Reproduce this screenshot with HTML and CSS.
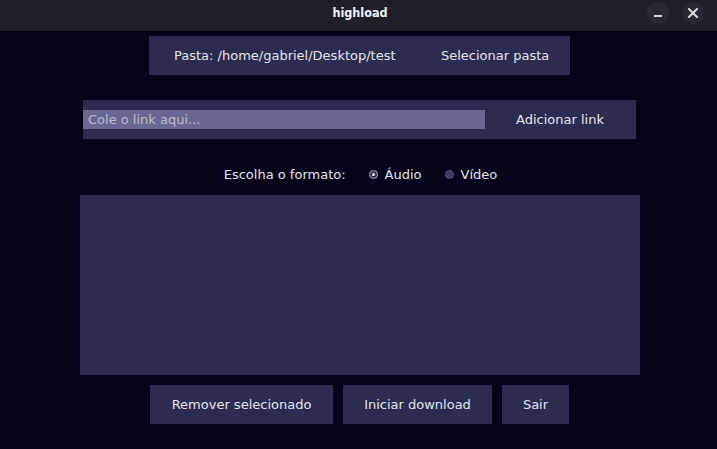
FILE: index.html
```html
<!DOCTYPE html>
<html lang="pt">
<head>
<meta charset="utf-8">
<title>highload</title>
<link rel="stylesheet" href="styles.css">
</head>
<body>
<div class="window">
  <header class="titlebar">
    <span class="title">highload</span>
    <div class="wm-buttons">
      <span class="wm-btn"><span class="minbar"></span></span>
      <span class="wm-btn">
        <svg width="10" height="10" viewBox="0 0 10 10"><path d="M1 1L9 9M9 1L1 9" stroke="#d8d8dc" stroke-width="2" stroke-linecap="square"/></svg>
      </span>
    </div>
  </header>
  <main class="content">
    <div class="frame folder">
      <span class="folder-label">Pasta: /home/gabriel/Desktop/test</span>
      <span class="btn folder-btn">Selecionar pasta</span>
    </div>
    <div class="frame link">
      <span class="entry">Cole o link aqui...</span>
      <span class="btn link-btn">Adicionar link</span>
    </div>
    <div class="format">
      <span class="format-label">Escolha o formato:</span>
      <span class="radio-opt"><span class="radio checked"></span>Áudio</span>
      <span class="radio-opt"><span class="radio"></span>Vídeo</span>
    </div>
    <div class="listbox"></div>
    <div class="actions">
      <span class="btn act remove">Remover selecionado</span>
      <span class="btn act start">Iniciar download</span>
      <span class="btn act quit">Sair</span>
    </div>
  </main>
</div>
</body>
</html>
```

FILE: styles.css
```css
* { box-sizing: border-box; }
html, body {
  margin: 0;
  padding: 0;
  width: 717px;
  height: 449px;
  overflow: hidden;
  background: #03031a;
  font-family: "DejaVu Sans", sans-serif;
  font-size: 13px;
  color: #e4e4ec;
}
.window {
  display: flex;
  flex-direction: column;
  height: 449px;
}
.titlebar {
  position: relative;
  height: 31px;
  background: #1e1f27;
  display: flex;
  align-items: center;
  justify-content: center;
}
.title {
  font-family: "DejaVu Sans Condensed", "DejaVu Sans", sans-serif;
  font-weight: bold;
  font-size: 12.5px;
  color: #f2f2f4;
  margin-top: -6px;
  margin-left: 3px;
}
.wm-buttons {
  position: absolute;
  right: 13px;
  top: 2px;
  display: flex;
  gap: 13px;
}
.wm-btn {
  width: 22px;
  height: 22px;
  border-radius: 50%;
  background: #282931;
  display: flex;
  align-items: center;
  justify-content: center;
}
.minbar {
  width: 8px;
  height: 2px;
  background: #d8d8dc;
  margin-top: 6px;
}
.content {
  display: flex;
  flex-direction: column;
  align-items: center;
}
.frame {
  background: #2c2b50;
  display: flex;
  align-items: center;
}
.folder {
  margin-top: 5px;
  margin-left: 2px;
  width: 421px;
  height: 39px;
  padding-left: 25px;
}
.folder-label { width: 267px; }
.link {
  margin-top: 25px;
  width: 553px;
  height: 39px;
  margin-left: 2px;
}
.entry {
  width: 402px;
  height: 19px;
  background: #696892;
  color: #bdbdd2;
  padding-left: 5px;
  line-height: 19px;
}
.link-btn { margin-left: 31px; }
.format {
  margin-top: 25px;
  height: 20px;
  display: flex;
  align-items: center;
  margin-left: 4px;
}
.format-label { margin-right: 23px; }
.radio-opt {
  display: flex;
  align-items: center;
  margin-right: 23px;
}
.radio-opt:last-child { margin-right: 0; }
.radio {
  width: 9px;
  height: 9px;
  border-radius: 50%;
  background: #3a3962;
  border: 1px solid #55547a;
  margin-right: 7px;
  display: flex;
  align-items: center;
  justify-content: center;
}
.radio.checked { background: #2c2b50; border-color: #a8a8c0; }
.radio.checked::after {
  content: "";
  width: 3px;
  height: 3px;
  border-radius: 50%;
  background: #ffffff;
}
.listbox {
  margin-top: 11px;
  margin-left: 2px;
  width: 560px;
  height: 180px;
  background: #2c2b50;
}
.actions {
  margin-top: 10px;
  display: flex;
  gap: 10px;
  margin-left: 2px;
}
.act {
  height: 39px;
  background: #2c2b50;
  display: flex;
  align-items: center;
  justify-content: center;
}
.remove { width: 183px; }
.start { width: 149px; }
.quit { width: 67px; }
```
